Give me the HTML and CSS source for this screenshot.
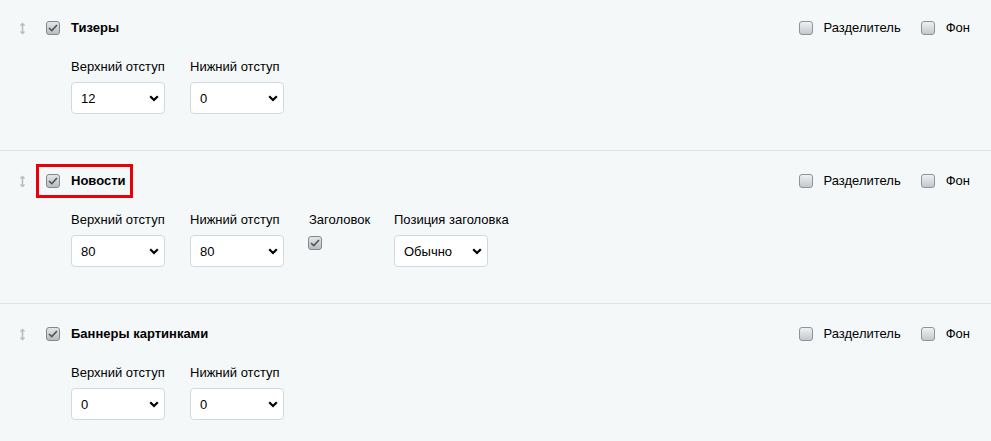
FILE: index.html
```html
<!DOCTYPE html>
<html lang="ru">
<head>
<meta charset="utf-8">
<title>Блоки</title>
<link rel="stylesheet" href="styles.css">
</head>
<body>
<div class="list">

  <section class="block block-first">
    <div class="head">
      <div class="head-left">
        <svg class="drag" width="7" height="13" viewBox="0 0 7 13"><path d="M3.5 0.5 L6.5 3.5 H4.3 V9.5 H6.5 L3.5 12.5 L0.5 9.5 H2.7 V3.5 H0.5 Z" fill="#b9bdc0"/></svg>
        <span class="cb checked"><svg width="10" height="8" viewBox="0 0 10 8"><path d="M1 4 L3.8 6.6 L9 1" fill="none" stroke="#505458" stroke-width="1.6"/></svg></span>
        <span class="title">Тизеры</span>
      </div>
      <div class="head-right">
        <span class="cb"></span><span class="opt">Разделитель</span>
        <span class="cb cb-gap"></span><span class="opt">Фон</span>
      </div>
    </div>
    <div class="fields">
      <div class="field">
        <div class="label">Верхний отступ</div>
        <div class="select"><span>12</span><svg width="10" height="7" viewBox="0 0 10 7"><path d="M1.2 1.2 L5 5 L8.8 1.2" fill="none" stroke="#000" stroke-width="2.2"/></svg></div>
      </div>
      <div class="field">
        <div class="label">Нижний отступ</div>
        <div class="select"><span>0</span><svg width="10" height="7" viewBox="0 0 10 7"><path d="M1.2 1.2 L5 5 L8.8 1.2" fill="none" stroke="#000" stroke-width="2.2"/></svg></div>
      </div>
    </div>
  </section>

  <section class="block">
    <div class="head">
      <div class="head-left">
        <svg class="drag" width="7" height="13" viewBox="0 0 7 13"><path d="M3.5 0.5 L6.5 3.5 H4.3 V9.5 H6.5 L3.5 12.5 L0.5 9.5 H2.7 V3.5 H0.5 Z" fill="#b9bdc0"/></svg>
        <span class="marked">
          <span class="cb checked"><svg width="10" height="8" viewBox="0 0 10 8"><path d="M1 4 L3.8 6.6 L9 1" fill="none" stroke="#505458" stroke-width="1.6"/></svg></span>
          <span class="title">Новости</span>
        </span>
      </div>
      <div class="head-right">
        <span class="cb"></span><span class="opt">Разделитель</span>
        <span class="cb cb-gap"></span><span class="opt">Фон</span>
      </div>
    </div>
    <div class="fields">
      <div class="field">
        <div class="label">Верхний отступ</div>
        <div class="select"><span>80</span><svg width="10" height="7" viewBox="0 0 10 7"><path d="M1.2 1.2 L5 5 L8.8 1.2" fill="none" stroke="#000" stroke-width="2.2"/></svg></div>
      </div>
      <div class="field">
        <div class="label">Нижний отступ</div>
        <div class="select"><span>80</span><svg width="10" height="7" viewBox="0 0 10 7"><path d="M1.2 1.2 L5 5 L8.8 1.2" fill="none" stroke="#000" stroke-width="2.2"/></svg></div>
      </div>
      <div class="field field-auto">
        <div class="label">Заголовок</div>
        <span class="cb checked cb-field"><svg width="10" height="8" viewBox="0 0 10 8"><path d="M1 4 L3.8 6.6 L9 1" fill="none" stroke="#505458" stroke-width="1.6"/></svg></span>
      </div>
      <div class="field">
        <div class="label">Позиция заголовка</div>
        <div class="select"><span>Обычно</span><svg width="10" height="7" viewBox="0 0 10 7"><path d="M1.2 1.2 L5 5 L8.8 1.2" fill="none" stroke="#000" stroke-width="2.2"/></svg></div>
      </div>
    </div>
  </section>

  <section class="block">
    <div class="head">
      <div class="head-left">
        <svg class="drag" width="7" height="13" viewBox="0 0 7 13"><path d="M3.5 0.5 L6.5 3.5 H4.3 V9.5 H6.5 L3.5 12.5 L0.5 9.5 H2.7 V3.5 H0.5 Z" fill="#b9bdc0"/></svg>
        <span class="cb checked"><svg width="10" height="8" viewBox="0 0 10 8"><path d="M1 4 L3.8 6.6 L9 1" fill="none" stroke="#505458" stroke-width="1.6"/></svg></span>
        <span class="title">Баннеры картинками</span>
      </div>
      <div class="head-right">
        <span class="cb"></span><span class="opt">Разделитель</span>
        <span class="cb cb-gap"></span><span class="opt">Фон</span>
      </div>
    </div>
    <div class="fields">
      <div class="field">
        <div class="label">Верхний отступ</div>
        <div class="select"><span>0</span><svg width="10" height="7" viewBox="0 0 10 7"><path d="M1.2 1.2 L5 5 L8.8 1.2" fill="none" stroke="#000" stroke-width="2.2"/></svg></div>
      </div>
      <div class="field">
        <div class="label">Нижний отступ</div>
        <div class="select"><span>0</span><svg width="10" height="7" viewBox="0 0 10 7"><path d="M1.2 1.2 L5 5 L8.8 1.2" fill="none" stroke="#000" stroke-width="2.2"/></svg></div>
      </div>
    </div>
  </section>

</div>
</body>
</html>
```

FILE: styles.css
```css
html, body {
  margin: 0;
  padding: 0;
  background: #f5f8f9;
  font-family: "Liberation Sans", Arial, sans-serif;
  font-size: 13px;
  color: #000;
}

.list {
  display: flex;
  flex-direction: column;
}

.block {
  padding: 20px 21px 36px 19px;
  border-bottom: 1px solid #dde5ea;
}

.block-first {
  padding-top: 18px;
}

.head {
  display: flex;
  align-items: center;
  justify-content: space-between;
  height: 20px;
}

.head-left {
  display: flex;
  align-items: center;
}

.drag {
  display: block;
  margin-right: 20px;
}

.marked {
  position: relative;
  display: flex;
  align-items: center;
}

.marked::after {
  content: "";
  position: absolute;
  left: -10px;
  right: -7px;
  top: -9px;
  bottom: -9px;
  border: 3px solid #e8000b;
}

.cb {
  box-sizing: border-box;
  width: 14px;
  height: 14px;
  border: 1px solid #8e9398;
  border-radius: 3px;
  background: linear-gradient(#eef0f2, #c4c8cd);
  display: inline-flex;
  align-items: center;
  justify-content: center;
  flex: none;
}

.cb.checked {
  background: linear-gradient(#e4e5e7, #b9bcc0);
  border-color: #84888d;
}

.cb svg {
  display: block;
}

.title {
  font-weight: bold;
  margin-left: 11px;
  line-height: 16px;
}

.head-right {
  display: flex;
  align-items: center;
}

.opt {
  margin-left: 11px;
  line-height: 16px;
}

.cb-gap {
  margin-left: 20px;
}

.fields {
  display: flex;
  gap: 25px;
  margin-top: 21px;
  padding-left: 52px;
}

.field {
  width: 94px;
  display: flex;
  flex-direction: column;
}

.field-auto {
  width: 60px;
}

.label {
  line-height: 16px;
  height: 16px;
  margin-bottom: 7px;
  white-space: nowrap;
}

.cb-field {
  margin-top: 1px;
  margin-left: -1px;
}

.select {
  box-sizing: border-box;
  width: 94px;
  height: 32px;
  background: #fff;
  border: 1px solid #cfdae0;
  border-radius: 4px;
  display: flex;
  align-items: center;
  justify-content: space-between;
  padding: 0 5px 0 9px;
}

.select svg {
  display: block;
  margin-top: 1px;
}
```
